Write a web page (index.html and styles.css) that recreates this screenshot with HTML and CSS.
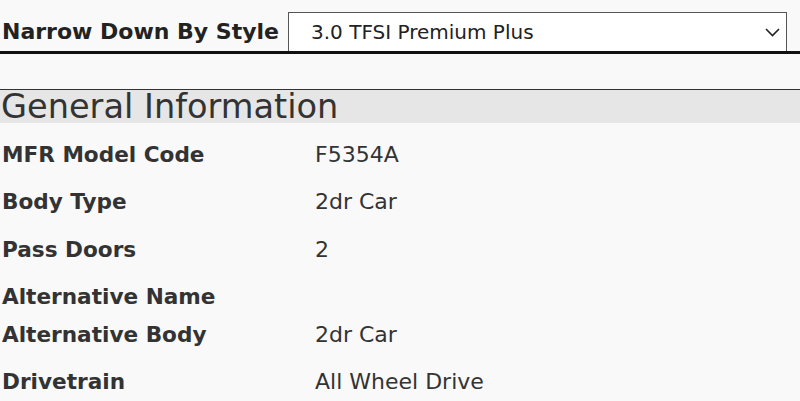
FILE: index.html
```html
<!DOCTYPE html>
<html>
<head>
<meta charset="utf-8">
<link rel="stylesheet" href="styles.css">
</head>
<body>
<div class="filter">
  <label class="filter-label">Narrow Down By Style</label>
  <div class="select">
    <span class="select-text">3.0 TFSI Premium Plus</span>
    <svg class="chev" width="15" height="9" viewBox="0 0 15 9"><path d="M1 1 L7.5 7.5 L14 1" fill="none" stroke="#222" stroke-width="1.6"/></svg>
  </div>
</div>
<div class="section">
  <h2 class="section-title">General Information</h2>
  <div class="rows">
    <div class="row"><div class="k">MFR Model Code</div><div class="v">F5354A</div></div>
    <div class="row"><div class="k">Body Type</div><div class="v">2dr Car</div></div>
    <div class="row"><div class="k">Pass Doors</div><div class="v">2</div></div>
    <div class="row short"><div class="k">Alternative Name</div><div class="v"></div></div>
    <div class="row"><div class="k">Alternative Body</div><div class="v">2dr Car</div></div>
    <div class="row"><div class="k">Drivetrain</div><div class="v">All Wheel Drive</div></div>
  </div>
</div>
</body>
</html>
```
FILE: styles.css
```css
html, body {
  margin: 0;
  padding: 0;
  background: #f9f9f9;
  color: #333;
  font-family: "DejaVu Sans", Verdana, sans-serif;
  overflow: hidden;
}
.filter {
  display: flex;
  align-items: flex-end;
  padding-top: 12px;
  border-bottom: 3px solid #111;
}
.filter-label {
  font-weight: bold;
  font-size: 22px;
  padding-left: 2px;
  width: 286px;
  line-height: 39px;
  color: #222;
  white-space: nowrap;
}
.select {
  box-sizing: border-box;
  width: 499px;
  height: 39px;
  background: #fff;
  border: 1px solid #555;
  border-bottom: none;
  display: flex;
  align-items: center;
  justify-content: space-between;
  padding: 0 6px 0 22px;
}
.select-text {
  font-size: 20px;
  color: #222;
}
.section {
  margin-top: 35px;
}
.section-title {
  margin: 0;
  font-weight: normal;
  font-size: 33.6px;
  line-height: 33px;
  border-top: 1px solid #333;
  background: #e6e6e6;
  padding-left: 1px;
  color: #333;
  white-space: nowrap;
}
.rows {
  padding-top: 8px;
}
.row {
  display: flex;
  box-sizing: border-box;
  height: 47.3px;
  padding-top: 10px;
  line-height: 27px;
  font-size: 22px;
}
.row.short {
  height: 38px;
}
.k {
  font-weight: bold;
  font-size: 21.6px;
  width: 313px;
  padding-left: 2px;
  white-space: nowrap;
}
.v {
  color: #333;
}
```
